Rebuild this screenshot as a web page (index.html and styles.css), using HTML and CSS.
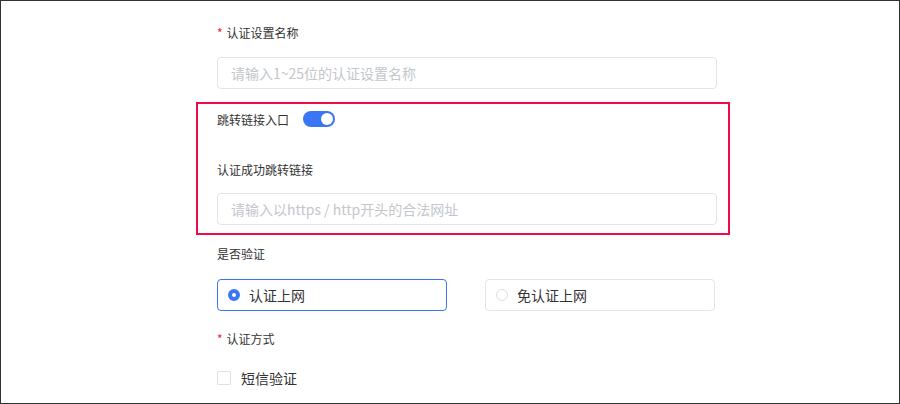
FILE: index.html
```html
<!DOCTYPE html>
<html lang="zh-CN">
<head>
<meta charset="utf-8">
<link rel="stylesheet" href="styles.css">
</head>
<body>
<div class="frame">
  <div class="form">
    <div class="label label-first"><span class="req">*</span>认证设置名称</div>
    <div class="input"><span class="ph">请输入1~25位的认证设置名称</span></div>

    <div class="highlight">
      <div class="toggle-row">
        <span class="toggle-label">跳转链接入口</span>
        <span class="switch"><span class="knob"></span></span>
      </div>
      <div class="label label-link">认证成功跳转链接</div>
      <div class="input"><span class="ph">请输入以https / http开头的合法网址</span></div>
    </div>

    <div class="label label-verify">是否验证</div>
    <div class="radios">
      <div class="radio-card active"><span class="radio on"></span><span class="rtext">认证上网</span></div>
      <div class="radio-card"><span class="radio"></span><span class="rtext">免认证上网</span></div>
    </div>

    <div class="label label-method"><span class="req">*</span>认证方式</div>
    <div class="check-row"><span class="checkbox"></span><span class="ctext">短信验证</span></div>
  </div>
</div>
</body>
</html>
```
FILE: styles.css
```css
* { box-sizing: border-box; }
html, body { margin: 0; padding: 0; }
body {
  width: 900px;
  height: 404px;
  background: #fff;
  font-family: "Noto Sans CJK SC", "Noto Sans", sans-serif;
  color: #333;
  overflow: hidden;
}
.frame {
  width: 900px;
  height: 404px;
  border: 1px solid #333;
  padding-left: 216px;
  padding-top: 22px;
}
.form { width: 500px; }
.label {
  font-size: 12px;
  line-height: 20px;
  height: 20px;
  color: #333;
}
.req { color: #f5222d; margin-right: 4px; font-size: 12px; }
.label-first { margin-bottom: 14px; }
.input {
  width: 500px;
  height: 32px;
  border: 1px solid #e3e4e6;
  border-radius: 4px;
  padding-left: 13px;
  display: flex;
  align-items: center;
}
.ph { font-size: 14px; color: #c3c6cc; }
.highlight {
  margin-top: 13px;
  margin-left: -21px;
  width: 534px;
  border: 2px solid #f20a48;
  padding: 5px 0 8px 19px;
}
.toggle-row {
  height: 20px;
  display: flex;
  align-items: center;
}
.toggle-label { font-size: 12px; color: #333; }
.switch {
  margin-left: 14px;
  width: 32px;
  height: 16px;
  border-radius: 8px;
  background: #3a76f4;
  position: relative;
}
.knob {
  position: absolute;
  right: 2px;
  top: 2px;
  width: 12px;
  height: 12px;
  border-radius: 50%;
  background: #fff;
}
.label-link { margin-top: 31px; margin-bottom: 13px; }
.label-verify { margin-top: 9px; margin-bottom: 15px; }
.radios {
  display: flex;
  gap: 38px;
}
.radio-card {
  width: 230px;
  height: 32px;
  border: 1px solid #e3e4e6;
  border-radius: 4px;
  display: flex;
  align-items: center;
  padding-left: 10px;
}
.radio-card.active { border-color: #3a76f4; }
.radio {
  width: 12px;
  height: 12px;
  border-radius: 50%;
  border: 1px solid #dcdfe6;
  background: #fff;
}
.radio.on {
  border: 4px solid #3a76f4;
}
.rtext { margin-left: 9px; font-size: 14px; color: #333; }
.label-method { margin-top: 18px; margin-bottom: 19px; }
.check-row {
  height: 20px;
  display: flex;
  align-items: center;
}
.checkbox {
  width: 14px;
  height: 14px;
  border: 1px solid #dcdfe6;
  border-radius: 2px;
  background: #fff;
}
.ctext { margin-left: 10px; font-size: 14px; color: #333; }
```
